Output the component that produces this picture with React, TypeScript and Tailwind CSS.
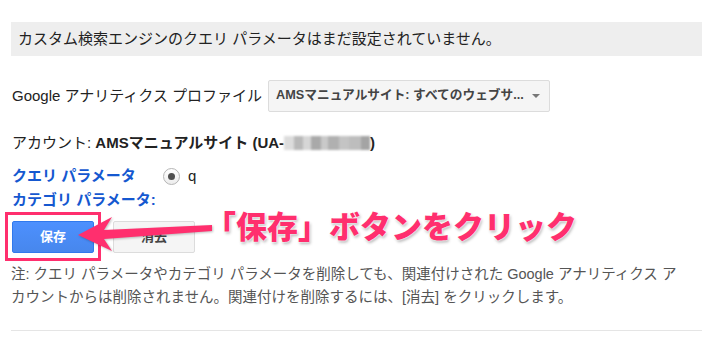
import React from 'react'

const font = "font-['Liberation_Sans','Noto_Sans_CJK_JP',sans-serif]"

function BlurredId() {
  // redacted UA number: blurred grey blocks
  return (
    <span className="inline-flex h-[14px] w-[86px] items-center overflow-hidden blur-[1px] align-middle">
      <span className="h-full w-[10px] bg-[#dcdcdc]" />
      <span className="h-full w-[9px] bg-[#b9b9b9]" />
      <span className="h-full w-[8px] bg-[#d6d6d6]" />
      <span className="h-full w-[10px] bg-[#a9a9a9]" />
      <span className="h-full w-[7px] bg-[#c9c9c9]" />
      <span className="h-full w-[11px] bg-[#b0b0b0]" />
      <span className="h-full w-[10px] bg-[#c4c4c4]" />
      <span className="h-full w-[12px] bg-[#bdbdbd]" />
      <span className="h-full w-[9px] bg-[#a4a4a4]" />
    </span>
  )
}

export default function App() {
  return (
    <div className={`${font} relative h-[339px] w-[720px] overflow-hidden bg-white text-[15px] text-[#222]`}>
      <div className="w-[691px] pl-[11px] pt-[22px] box-content">
        <div className="flex h-[34px] items-center bg-[#eeeeee] pl-[7px]">
          カスタム検索エンジンのクエリ パラメータはまだ設定されていません。
        </div>

        <div className="mt-[24px] flex items-center gap-[6px] pl-[1px]">
          <span>Google アナリティクス プロファイル</span>
          <div className="flex h-[32px] w-[282px] items-center justify-between rounded-[2px] border border-[#dcdcdc] bg-[#f5f5f5] pl-[7px] pr-[9px] text-[12.7px] font-bold text-[#444]">
            <span>AMSマニュアルサイト: すべてのウェブサ...</span>
            <span className="h-0 w-0 border-x-[4px] border-t-[4px] border-x-transparent border-t-[#777]" />
          </div>
        </div>

        <div className="mt-[20px] flex h-[22px] items-center pl-[1px]">
          <span>アカウント:&nbsp;</span>
          <span className="font-bold">AMSマニュアルサイト (UA-</span>
          <BlurredId />
          <span className="font-bold">)</span>
        </div>

        <div className="mt-[11px] flex h-[22px] items-center pl-[1px]">
          <span className="w-[151px] font-bold text-[#1558d0]">クエリ パラメータ</span>
          <span className="flex h-[17px] w-[17px] items-center justify-center rounded-full border border-[#b5b5b5] bg-gradient-to-b from-white to-[#ededed]">
            <span className="h-[7px] w-[7px] rounded-full bg-[#505050]" />
          </span>
          <span className="ml-[8px]">q</span>
        </div>

        <div className="mt-[2px] flex h-[22px] items-center pl-[1px] font-bold text-[#1558d0]">
          カテゴリ パラメータ:
        </div>

        <div className="relative mt-[10px] flex h-[32px] items-center gap-[19px] pl-[1px]">
          <button className="flex h-[32px] w-[82px] items-center justify-center rounded-[2px] border border-[#3079ed] bg-gradient-to-b from-[#4d90fe] to-[#4787ed] text-[13px] font-bold text-white">
            保存
          </button>
          <button className="flex h-[32px] w-[82px] items-center justify-center rounded-[2px] border border-[#dcdcdc] bg-[#f5f5f5] text-[13px] font-bold text-[#444]">
            消去
          </button>
          <div className="absolute left-[-6px] top-[-9px] h-[49px] w-[96px] border-[3px] border-[#ff2f6e]" />
        </div>

        <p className="mt-[10px] whitespace-nowrap text-[14.5px] leading-[23px] text-[#555]">
          注: クエリ パラメータやカテゴリ パラメータを削除しても、関連付けされた Google アナリティクス ア
          <br />
          カウントからは削除されません。関連付けを削除するには、[消去] をクリックします。
        </p>

        <div className="mt-[21px] border-t border-[#e5e5e5]" />
      </div>

      <svg
        className="absolute left-[70px] top-[210px] drop-shadow-[1px_1px_1px_rgba(0,0,0,0.25)]"
        width="150"
        height="50"
        viewBox="0 0 150 50"
      >
        <polygon
          points="8,25 42,7 34,20 142,15 142,21 34,29 42,41"
          fill="#ff2f6e"
        />
      </svg>

      <div className="absolute left-[205px] top-[205px] text-[31px] font-black leading-[40px] text-[#ff2f6e] font-['Noto_Sans_CJK_JP',sans-serif] [text-shadow:0_0_2px_#fff,0_0_2px_#fff,1px_2px_3px_rgba(0,0,0,0.3)]">
        「保存」ボタンをクリック
      </div>
    </div>
  )
}
